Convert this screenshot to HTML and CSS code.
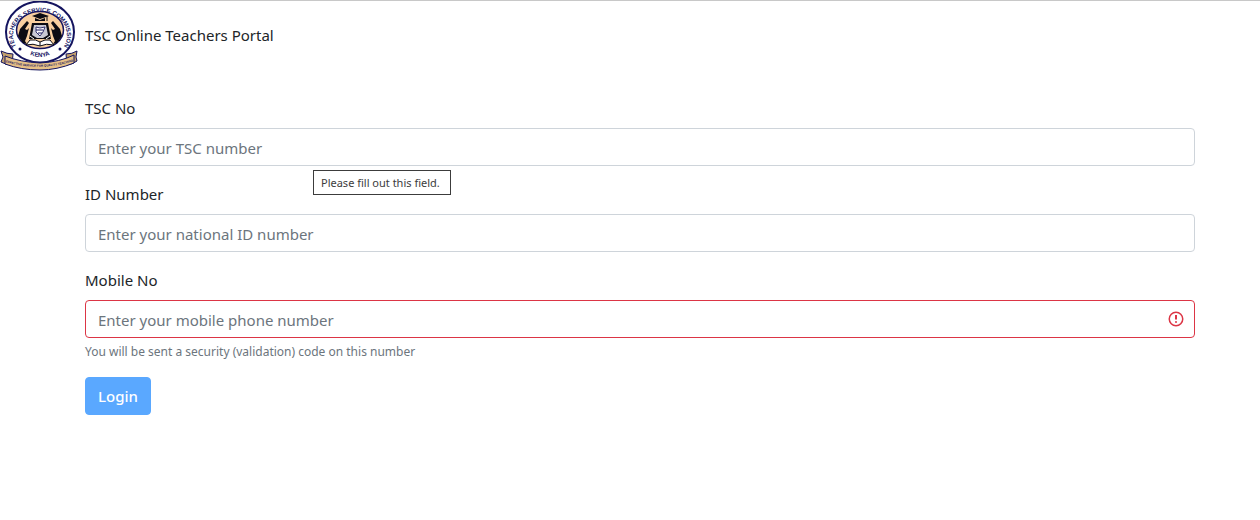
FILE: index.html
```html
<!DOCTYPE html>
<html lang="en">
<head>
    <meta charset="UTF-8">
    <meta name="viewport" content="width=device-width, initial-scale=1.0">
    <title>TSC Online Teachers Portal</title>
    <link rel="stylesheet" href="styles.css">
</head>

<body>
    <div class="page">
        <!-- Crest -->
        <svg class="logo" viewBox="0 0 78 70" role="img" aria-label="Teachers Service Commission Kenya">
            <defs>
                <path id="ring-top" d="M18 48 A27 23.5 0 1 1 62 48" />
                <path id="ring-bottom" d="M20 47 Q40 65 60 47" />
                <path id="motto" d="M5 61 Q40 71 74 60" />
            </defs>
            <ellipse cx="40" cy="31" rx="34" ry="30.5" fill="#fff" stroke="#14145f" stroke-width="2" />
            <ellipse cx="40" cy="29" rx="23.5" ry="18.5" fill="#f8cf9f" stroke="#14145f" stroke-width="1.5" />
            <text class="ring-text"><textPath href="#ring-top" startOffset="50%" text-anchor="middle">TEACHERS SERVICE COMMISSION</textPath></text>
            <text class="ring-text"><textPath href="#ring-bottom" startOffset="50%" text-anchor="middle">KENYA</textPath></text>
            <circle cx="20" cy="48" r="1.5" fill="#14145f" />
            <circle cx="60" cy="48" r="1.5" fill="#14145f" />
            <!-- Hands -->
            <path d="M18 35 L20 28 L27 20 L29 22 L25 28 L27 29 L29 27 L27 35 L25 40 L27 43 L23 42 Z" fill="#0b0b12" />
            <path d="M62 35 L60 28 L53 20 L51 22 L55 28 L53 29 L51 27 L53 35 L55 40 L53 43 L57 42 Z" fill="#0b0b12" />
            <!-- Cap -->
            <path d="M32 15 L40 12 L49 15 L40 18 Z M35 17 L40 19 L45 17 L45 20 L35 20 Z" fill="#0b0b12" />
            <path d="M47 15 V20" stroke="#0b0b12" />
            <!-- Shield and book -->
            <path d="M32 22 H48 L51 38 H29 Z" fill="#0b0b12" />
            <path d="M34 24 H46 L48 34 L43 37 H37 L32 34 Z" fill="#c9c9d4" />
            <path d="M36 26 L40 27 L45 26 L43 31 L40 35 L36 31 Z" fill="#fff" stroke="#333370" />
            <path d="M36 29 H43 M38 32 H42" stroke="#14145f" />
            <path d="M30 35 L34 38 M50 35 L46 38" stroke="#fff" />
            <path d="M26 44 L30 39 Q36 38 40 41 Q45 38 50 39 L54 44 Q46 42 40 45 Q33 42 26 44 Z" fill="#fff" stroke="#0b0b12" />
            <path d="M40 41 V45" stroke="#0b0b12" />
            <!-- Ribbon -->
            <path d="M1 50 Q7 53 13 53 L12 64 Q6 64 1 61 L3 56 Z" fill="#c4a16d" stroke="#14145f" />
            <path d="M77 50 Q72 53 66 53 L67 64 Q73 63 77 60 L76 56 Z" fill="#c4a16d" stroke="#14145f" />
            <path d="M5 55 Q20 61 40 62 Q60 61 74 54 L74 62 Q57 69 40 69 Q21 69 5 63 Z" fill="#e5bf86" stroke="#14145f" />
            <text class="motto-text"><textPath href="#motto" startOffset="50%" text-anchor="middle">EFFECTIVE SERVICE FOR QUALITY TEACHING</textPath></text>
        </svg>

        <header class="header">
            <span class="title">TSC Online Teachers Portal</span>
        </header>

        <form class="login-form" novalidate>
            <div class="form-group">
                <label for="tsc-no">TSC No</label>
                <input type="text" class="form-control" id="tsc-no" placeholder="Enter your TSC number" aria-describedby="tsc-tip" required>
                <div class="tooltip" id="tsc-tip" role="tooltip">Please fill out this field.</div>
            </div>

            <div class="form-group">
                <label for="id-number">ID Number</label>
                <input type="text" class="form-control" id="id-number" placeholder="Enter your national ID number" required>
            </div>

            <div class="form-group">
                <label for="mobile-no">Mobile No</label>
                <div class="control-wrap">
                    <input type="tel" class="form-control is-invalid" id="mobile-no" placeholder="Enter your mobile phone number" aria-describedby="mobile-help" aria-invalid="true" required>
                    <svg class="error-icon" viewBox="0 0 16 16" aria-hidden="true">
                        <circle cx="8" cy="8" r="6.75" fill="none" stroke="#dc3545" stroke-width="1.5" />
                        <path d="M8 4 V8.5" stroke="#dc3545" stroke-width="2" />
                        <circle cx="8" cy="11" r="1" fill="#dc3545" />
                    </svg>
                </div>
                <small class="form-text" id="mobile-help">You will be sent a security (validation) code on this number</small>
            </div>

            <button type="submit" class="btn" disabled>Login</button>
        </form>
    </div>
</body>
</html>
```
FILE: styles.css
```css
* {
    box-sizing: border-box;
}

body {
    margin: 0;
    border-top: 1px solid #c8c8c8;
    background-color: #fff;
    color: #212529;
    font-family: "Segoe UI", "Noto Sans", sans-serif;
    font-size: 15px;
    line-height: 24px;
}

/* Logo sits in the left gutter, everything else in the middle column */
.page {
    display: grid;
    grid-template-columns: minmax(85px, 1fr) minmax(0, 1110px) minmax(65px, 1fr);
    row-gap: 25px;
}

.logo {
    width: 78px;
    height: 70px;
}

.ring-text {
    fill: #14145f;
    font-family: "Liberation Sans", Arial, sans-serif;
    font-size: 6px;
    font-weight: bold;
}

.motto-text {
    fill: #14145f;
    font-family: "Liberation Sans Narrow", "Liberation Sans", Arial, sans-serif;
    font-size: 3px;
    font-weight: bold;
}

.header {
    display: flex;
    align-items: center;
    padding-bottom: 2px;
}

.login-form {
    grid-column: 2;
}

.form-group {
    position: relative;
    margin-bottom: 16px;
}

label {
    display: block;
    margin-bottom: 8px;
}

.form-control {
    display: block;
    width: 100%;
    height: 38px;
    padding: 7px 12px 5px;
    border: 1px solid #ced4da;
    border-radius: 4px;
    background-color: #fff;
    color: #495057;
    font: inherit;
}

.form-control::placeholder {
    color: #6c757d;
    opacity: 1;
}

.form-control.is-invalid {
    padding-right: 36px;
    border-color: #dc3545;
}

.control-wrap {
    position: relative;
}

.error-icon {
    position: absolute;
    top: 11px;
    right: 11px;
    width: 16px;
    height: 16px;
}

.form-text {
    display: block;
    margin-top: 4px;
    color: #6c757d;
    font-size: 12px;
    line-height: 19px;
}

/* Hint shown over the gap below the first field */
.tooltip {
    position: absolute;
    top: 74px;
    left: 228px;
    padding: 3px 10px 3px 7px;
    border: 1px solid #3c3c3c;
    background-color: #fff;
    color: #3c3c3c;
    font-size: 11px;
    line-height: 17px;
    white-space: nowrap;
}

.btn {
    height: 38px;
    padding: 6px 12px;
    border: 1px solid #5aa8ff;
    border-radius: 4px;
    background-color: #5aa8ff;
    color: #fff;
    font: inherit;
    font-weight: 500;
}
```
